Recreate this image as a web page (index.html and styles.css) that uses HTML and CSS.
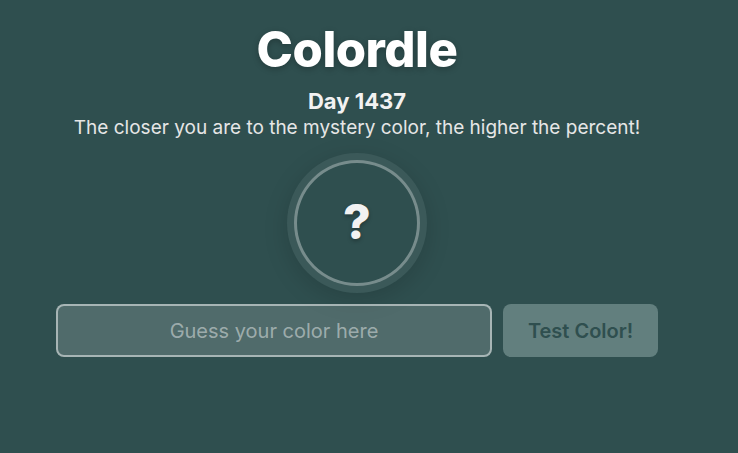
FILE: index.html
```html
<!DOCTYPE html>
<html lang="en">
<head>
<meta charset="utf-8">
<title>Colordle</title>
<link rel="stylesheet" href="styles.css">
</head>
<body>
<main class="app">
  <h1 class="title">Colordle</h1>
  <h2 class="day">Day 1437</h2>
  <p class="subtitle">The closer you are to the mystery color, the higher the percent!</p>
  <div class="mystery">
    <div class="ring"><span class="qmark">?</span></div>
  </div>
  <form class="guess">
    <input class="guess-input" type="text" placeholder="Guess your color here" autofocus>
    <button class="guess-btn" type="button" disabled>Test Color!</button>
  </form>
</main>
</body>
</html>
```

FILE: styles.css
```css
html, body {
  margin: 0;
  padding: 0;
  height: 100%;
}
body {
  background: #2f4f4f;
  font-family: Inter, "Noto Sans", sans-serif;
  color: #fff;
}
.app {
  width: 714px;
  display: flex;
  flex-direction: column;
  align-items: center;
  padding-top: 20px;
}
.title {
  margin: 0;
  font-size: 49px;
  font-weight: 800;
  line-height: 60px;
  letter-spacing: -0.5px;
  text-shadow: 0 2px 6px rgba(0,0,0,0.25);
}
.day {
  margin: 8px 0 0;
  font-size: 22px;
  font-weight: 700;
  line-height: 26px;
  color: #f2f2f2;
}
.subtitle {
  margin: 2px 0 0;
  font-size: 19px;
  line-height: 24px;
  color: #e6e6e6;
}
.mystery {
  margin-top: 13px;
  width: 140px;
  height: 140px;
  border-radius: 50%;
  background: rgba(255,255,255,0.06);
  display: flex;
  align-items: center;
  justify-content: center;
  box-shadow: 0 6px 24px rgba(0,0,0,0.15);
}
.ring {
  width: 120px;
  height: 120px;
  border-radius: 50%;
  border: 3px solid rgba(255,255,255,0.35);
  background: #2f4f4f;
  display: flex;
  align-items: center;
  justify-content: center;
}
.qmark {
  font-size: 48px;
  font-weight: 800;
  color: #f2f2f2;
  text-shadow: 0 2px 4px rgba(0,0,0,0.3);
  line-height: 1;
  margin-top: -3px;
}
.guess {
  margin-top: 11px;
  display: flex;
  gap: 11px;
}
.guess-input {
  box-sizing: border-box;
  width: 436px;
  height: 53px;
  border: 2px solid rgba(255,255,255,0.5);
  border-radius: 8px;
  background: rgba(255,255,255,0.16);
  color: #fff;
  caret-color: #fff;
  font-family: inherit;
  font-size: 20px;
  text-align: center;
  outline: none;
  padding: 0 12px;
}
.guess-input::placeholder {
  color: rgba(255,255,255,0.45);
}
.guess-btn {
  box-sizing: border-box;
  width: 155px;
  height: 53px;
  border: none;
  border-radius: 8px;
  background: #627f7e;
  color: #2f4f4f;
  font-family: inherit;
  font-size: 20px;
  font-weight: 600;
}
```
